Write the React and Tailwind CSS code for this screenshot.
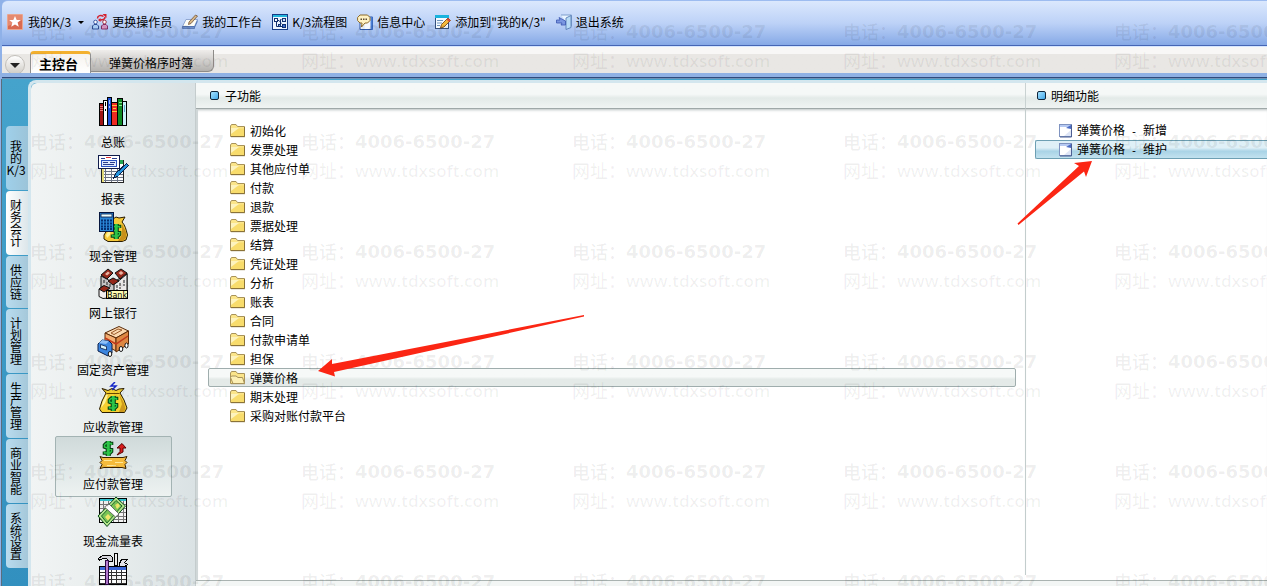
// App.jsx
import { useState } from "react";

const railTabs = [
  ["我", "的", "K/3"],
  ["财", "务", "会", "计"],
  ["供", "应", "链"],
  ["计", "划", "管", "理"],
  ["生", "产", "管", "理"],
  ["商", "业", "智", "能"],
  ["系", "统", "设", "置"],
];

const folders = [
  "初始化",
  "发票处理",
  "其他应付单",
  "付款",
  "退款",
  "票据处理",
  "结算",
  "凭证处理",
  "分析",
  "账表",
  "合同",
  "付款申请单",
  "担保",
  "弹簧价格",
  "期末处理",
  "采购对账付款平台",
];

const details = [
  { group: "弹簧价格", action: "新增" },
  { group: "弹簧价格", action: "维护" },
];

// ---- toolbar icons (16 x 16) ----

function SmallIcon({ children }) {
  return (
    <svg viewBox="0 0 16 16" className="size-4 shrink-0" aria-hidden="true">
      {children}
    </svg>
  );
}

function StarIcon() {
  return (
    <SmallIcon>
      <rect width="16" height="16" rx="1" fill="#e9a58f" />
      <rect x="1" y="1" width="14" height="14" fill="#d96a50" />
      <path d="M1 1h14v5L1 12z" fill="#e58a70" />
      <path
        d="M8 2l1.7 4h4.1l-3.2 2.6 1.2 4.2L8 10.4l-3.8 2.4 1.2-4.2L2.2 6h4.1z"
        fill="#fff"
      />
    </SmallIcon>
  );
}

function SwitchUserIcon() {
  return (
    <SmallIcon>
      <path d="M5.500 4.500C5.500 1.500 9 .5 11.500 2.500M8 6c3 0 5-1 5-3" fill="none" stroke="#d5202c" strokeWidth="1.5" />
      <path d="M10.500 0l4 0 0 4zM8.500 4v4L6 6z" fill="#d5202c" />
      <circle cx="3.500" cy="8" r="1.800" fill="#fff" stroke="#2f4d9a" strokeWidth=".9" />
      <path d="M.5 15v-3l1.500-1.500h3L6.500 12v3z" fill="#a9ccf4" stroke="#24428c" strokeWidth=".9" />
      <circle cx="12.500" cy="8" r="1.800" fill="#fff" stroke="#a02a3a" strokeWidth=".9" />
      <path d="M9.500 15v-3l1.500-1.500h3l1.500 1.500v3z" fill="#dc9ac6" stroke="#7b1f5a" strokeWidth=".9" />
    </SmallIcon>
  );
}

function DeskIcon() {
  return (
    <SmallIcon>
      <path d="M4 5.500h11.500l-3 7H.5z" fill="#fdfdf8" stroke="#7f98c8" strokeWidth=".8" />
      <path d="M.5 12.500h12v2H.5z" fill="#6d8ec9" stroke="#3c5c9e" strokeWidth=".6" />
      <path d="M12.500 12.500l3-7v2.500l-3 6.500z" fill="#4f73b5" />
      <path d="M13.500 1l2 1-6.500 7.500-2.500 1 .5-2.500z" fill="#d9b98a" stroke="#705238" strokeWidth=".8" />
    </SmallIcon>
  );
}

function FlowIcon() {
  return (
    <SmallIcon>
      <rect x=".5" y=".5" width="15" height="15" fill="#eef5ff" stroke="#173b86" />
      <rect x="1" y="1" width="14" height="2" fill="#22b6dc" />
      <path d="M4.500 7v5.500h3M5 6.500h2l2.500 3M9.500 5.500h-1v7h3" fill="none" stroke="#14306e" />
      <rect x="2.500" y="4.500" width="3" height="3" fill="#fff" stroke="#14306e" />
      <rect x="6.500" y="10.500" width="2" height="2" fill="#6fa0ee" stroke="#14306e" />
      <rect x="10.500" y="4.500" width="3" height="3" fill="#cfe0fb" stroke="#14306e" />
      <rect x="10.500" y="10.500" width="3" height="3" fill="#3b6ed0" stroke="#14306e" />
    </SmallIcon>
  );
}

function MessageIcon() {
  return (
    <SmallIcon>
      <path d="M3 3h12.500v12.500H3z" fill="#f6f9ff" stroke="#2c57a8" />
      <path d="M13.500 3h2v12.500h-2z" fill="#4a7fd6" />
      <path
        d="M3 1h7.500L13 3.500v3L10.500 9H8l-3.500 4 .5-4H3L.6 6.500v-3z"
        fill="#fff2c4"
        stroke="#8d6a28"
      />
      <path d="M3.500 4.500h1.500v1.500H3.500zM6 4.500h1.500v1.500H6zM8.500 4.500H10v1.500H8.500z" fill="#5a4a34" />
    </SmallIcon>
  );
}

function AddNoteIcon() {
  return (
    <SmallIcon>
      <rect x=".5" y="1.500" width="13" height="13" fill="#f4faff" stroke="#35507c" />
      <rect x="0" y="1" width="14" height="3" fill="#19b3dd" />
      <path d="M2 6.500h6M2 9h5M2 11.500h3" stroke="#6f94bd" />
      <path d="M13 4l2.500 2.500L9 13l-3.500 1 1-3.500z" fill="#f4b93c" stroke="#7a4a1b" strokeWidth=".9" />
      <path d="M13 4l2.500 2.500-1.500 1.500-2.500-2.500z" fill="#d8483a" />
    </SmallIcon>
  );
}

function ExitIcon() {
  return (
    <SmallIcon>
      <path d="M5 1h10.500v11h-3" fill="#e9f4ff" stroke="#7d9dcc" />
      <path d="M15 1.500v12l-5 2V4z" fill="#b9dcf6" stroke="#5a7fb5" strokeWidth=".9" />
      <path d="M.5 6H4L3 3.500 9.500 7v4H5l1-2H.5z" fill="#7a96e0" stroke="#3a55ae" strokeWidth=".8" />
    </SmallIcon>
  );
}

// ---- module icons (32 x 32) ----

function ModuleIcon({ smooth, children }) {
  return (
    <svg
      viewBox="0 0 32 32"
      className="size-8 shrink-0"
      shapeRendering={smooth ? "auto" : "crispEdges"}
      aria-hidden="true"
    >
      {children}
    </svg>
  );
}

function BooksIcon() {
  return (
    <ModuleIcon>
      <g stroke="#000">
        <rect x="2.500" y="6.500" width="4" height="22" fill="#a01414" />
        <rect x="6.500" y="3.500" width="4" height="25" fill="#fff" />
        <rect x="10.500" y=".5" width="4" height="28" fill="#1c50d8" />
        <rect x="14.500" y="5.500" width="6" height="23" fill="#ee2a22" />
        <rect x="20.500" y="1.500" width="5" height="27" fill="#0f8a24" />
        <rect x="25.500" y="4.500" width="4" height="24" fill="#c9f3fb" />
      </g>
      <path d="M3 9h3M3 11h3M3 13h3" stroke="#e87878" />
      <path d="M8 6h1M8 8h1M8 13h1" stroke="#000" strokeWidth="2" />
      <path d="M12 3v4M12 9v2" stroke="#9fc0ff" />
      <path d="M15 8h5M16 11h3M15 14h5" stroke="#ffc23a" />
      <path d="M22 5h3M22 8h3" stroke="#8fe39a" />
      <path d="M27 8v7" stroke="#58a7c8" />
    </ModuleIcon>
  );
}

function ReportIcon() {
  return (
    <ModuleIcon>
      <rect x="4.500" y="6.500" width="22" height="22" fill="#fff" stroke="#222" />
      <rect x="22" y="6" width="4" height="4" fill="#22a652" />
      <path d="M5 17.500h21M5 20.500h21M5 23.500h21M5 26.500h21M8.500 15v13M14.500 15v13M20.500 12v17" stroke="#6d7484" />
      <path d="M5 15h2v13H5z" fill="#e4dc7a" />
      <rect x="1.500" y="1.500" width="21" height="13" fill="#fff" stroke="#101c4c" />
      <rect x="4.500" y="6.500" width="15" height="6" fill="#dfe9ff" stroke="#2a52c0" />
      <path d="M4 4.500h4M15 4.500h5M6 8.500h5M13 8.500h5M6 10.500h11" stroke="#2a3c8c" />
      <path d="M9 3.500h5" stroke="#e03030" />
      <path d="M29.500 9.500l2 2-10 10-5 3 2-5z" fill="#2595e0" stroke="#0b1e4a" />
    </ModuleIcon>
  );
}

// dollar sign shared by the money icons, 10 x 16
function Dollar({ x, y }) {
  const sign = "M8.500 5V3.500H3L1.500 5v2L8.500 9.500v2L7 13H1.500v-1.500M4.500 1v15M6 1v15";
  return (
    <g transform={`translate(${x} ${y})`} fill="none">
      <path d={sign} stroke="#063f12" strokeWidth="3.600" />
      <path d={sign} stroke="#2cc548" strokeWidth="1.500" />
    </g>
  );
}

function CashIcon() {
  return (
    <ModuleIcon smooth>
      <path
        d="M14 10l-2-4 4 2 3-2 3 1 6-1-3 5c3 3 4 7 5.500 13l-1.500 5-4 1.500H11l-4-2.500v-4l5-8z"
        fill="#f6c938"
        stroke="#2a1c00"
      />
      <path d="M25 13l4 8v6l-3 3h-5l4-6z" fill="#c8901a" />
      <path d="M9 24l5-8-1 8-3 3z" fill="#fff29a" />
      <Dollar x={14} y={12} />
      <rect x="2.500" y="1.500" width="14" height="19" fill="#2a86d6" stroke="#06163e" />
      <rect x="4" y="3" width="11" height="3" fill="#eaffff" stroke="#06163e" strokeWidth=".8" />
      <path
        d="M4 9.500h2m1 0h2m1 0h2m1 0h2M4 12.500h2m1 0h2m1 0h2m1 0h2M4 15.500h2m1 0h2m1 0h2m1 0h2M4 18h2m1 0h2m1 0h2m1 0h2"
        stroke="#052f70"
        strokeWidth="1.800"
      />
    </ModuleIcon>
  );
}

function BankIcon() {
  return (
    <ModuleIcon smooth>
      <path d="M4 8l6 3 6 4 7-5 7-5v24H4z" fill="#c9c7c8" stroke="#111" />
      <path d="M17 16l7-5 6-5v22H17z" fill="#eceaea" stroke="#111" />
      <path d="M4 7l7-6 5 4-6 6zM18 5l6-4 6 4-7 6zM11 13l5-3 6 3-6 4z" fill="#96281a" stroke="#111" />
      <path d="M8 6l3-2.500L13 5l-3 2.500zM21.500 5L24 3l2.500 2L24 7z" fill="#e9b4a2" />
      <path d="M7 12v3m3-1v3m3-1v3m7-2v3m3-5v3m4-6v3m-7 6v2m3-4v2m4-5v2" stroke="#222" />
      <path d="M2 21l4-3 5 3v9l-5 .5-4-2z" fill="#f2eeee" stroke="#111" />
      <path d="M2 21l5-3.500 6 2.500-6 4z" fill="#96281a" stroke="#111" />
      <rect x="9.500" y="22.500" width="21" height="8" fill="#fdfcb0" stroke="#000" />
      <text
        x="20"
        y="29.500"
        textAnchor="middle"
        fontSize="8"
        fontFamily="DejaVu Sans, sans-serif"
      >
        Bank
      </text>
    </ModuleIcon>
  );
}

function TruckIcon() {
  return (
    <ModuleIcon smooth>
      <path d="M8 8L22 1.500 31.500 6 19 13z" fill="#fbd9b0" stroke="#5a2a08" />
      <path d="M8 8l11 5v13L8 20z" fill="#f4ad70" stroke="#5a2a08" />
      <path d="M19 13l12.500-7v13L19 27z" fill="#dd8742" stroke="#5a2a08" />
      <path d="M8 13l11 6 12-8" fill="none" stroke="#c03a1c" strokeWidth="1.500" />
      <path d="M14 8l7-4 4 1-8 4.500z" fill="none" stroke="#9a5a2c" />
      <path d="M1 19l4-4 7 1 3 3v9l-4 3-10-5z" fill="#3c86e0" stroke="#0b1e4a" />
      <path d="M5 15l7 1-3 3-7-1z" fill="#8fc0f6" />
      <path d="M3.500 19.500l6 2v3.500l-6-2z" fill="#d8f4fa" stroke="#0b1e4a" strokeWidth=".8" />
      <g fill="#fff" stroke="#111">
        <ellipse cx="13" cy="29" rx="1.800" ry="2.500" />
        <ellipse cx="24" cy="24" rx="1.800" ry="2.500" />
        <ellipse cx="29.500" cy="20.500" rx="1.600" ry="2.500" />
      </g>
    </ModuleIcon>
  );
}

function ReceivableIcon() {
  return (
    <ModuleIcon smooth>
      <path
        d="M9 11L5 6.500l6 2 4-2 4 2 3-1.500 5-.5-4 4.500 4 7 3 8-2.500 4.500H5L2.500 27l2.500-8z"
        fill="#f6d030"
        stroke="#2a1c00"
      />
      <path d="M22 12l5 9 1.500 6-2 3H22l3-8z" fill="#cf9a1c" />
      <path d="M9 13l-3 6-2 7 4-5 3-8z" fill="#fff49c" />
      <path d="M9.500 11.500h13" stroke="#6a4800" />
      <Dollar x={11} y={13} />
      <path d="M18 0l-4 4h5l-4 4" fill="none" stroke="#1428c8" strokeWidth="1.500" />
    </ModuleIcon>
  );
}

function PayableIcon() {
  return (
    <ModuleIcon smooth>
      <path
        d="M3 17.500l3 1h20l4-1-2 4 2 2-2 2 1 4-4-1H7l-4 1 2-4-2-2 2-2z"
        fill="#f5bb3c"
        stroke="#3a2200"
      />
      <path d="M7 21.500h8m3 2h8m-16 3h9" stroke="#ffe89a" />
      <Dollar x={6} y={1} />
      <path d="M20 16l3-3.500V9h-3l5-4.500L29 9h-3v4z" fill="#d81c1c" stroke="#5a0000" />
    </ModuleIcon>
  );
}

function CashFlowIcon() {
  return (
    <ModuleIcon smooth>
      <rect x="2.500" y="2.500" width="27" height="24" fill="#f4f4f4" stroke="#000" />
      <rect x="3" y="3" width="26" height="2" fill="#32c4d0" />
      <path d="M3 8.500h26M3 12.500h26M3 16.500h26M3 20.500h26M3 23.500h26M6.500 5v21M11.500 5v21M16.500 5v21M21.500 5v21M26.500 5v21" stroke="#777" />
      <path d="M1 20L19 1l9.500 9L10 30.500z" fill="#b5e48c" stroke="#0a4a1a" />
      <path d="M4.500 20L19 4.500l6 5.500L10 27z" fill="#79c456" stroke="#1d6a2a" />
      <path d="M8 21l3-3 3 3-3 3.500zM18 9l3-2 2 3-3 3z" fill="#f0e66a" />
      <path d="M7.500 11l4.500-3 10 10-3.500 3z" fill="#fff" stroke="#555" strokeWidth=".8" />
    </ModuleIcon>
  );
}

function ToolsIcon() {
  return (
    <ModuleIcon>
      <rect x="2.500" y="13.500" width="27" height="18" fill="#fff" stroke="#000" />
      <rect x="3" y="14" width="26" height="3" fill="#3a66d8" />
      <path d="M3 19.500h26M3 22.500h26M3 26.500h26M3 30.500h26M14.500 17v14M19.500 17v14M24.500 17v14" stroke="#333" />
      <path d="M1.500 5.500l4-3h8l2 2v4h-3l-3-3h-4l-3 2z" fill="#d6d6dc" stroke="#000" />
      <path d="M8.500 7.500h3v24h-3z" fill="#b57ad0" stroke="#2c0a44" />
      <path d="M17.500.5h3v12h-3z" fill="#eee" stroke="#000" />
      <path d="M22.500 10.500l2-4h6l-3 3 3 2-3 2h-5z" fill="#e2e2e8" stroke="#000" />
    </ModuleIcon>
  );
}

const modules = [
  { name: "总账", Icon: BooksIcon },
  { name: "报表", Icon: ReportIcon },
  { name: "现金管理", Icon: CashIcon },
  { name: "网上银行", Icon: BankIcon },
  { name: "固定资产管理", Icon: TruckIcon },
  { name: "应收款管理", Icon: ReceivableIcon },
  { name: "应付款管理", Icon: PayableIcon },
  { name: "现金流量表", Icon: CashFlowIcon },
  { name: "系统工具", Icon: ToolsIcon, iconOnly: true },
];

const toolbar = [
  { name: "更换操作员", Icon: SwitchUserIcon },
  { name: "我的工作台", Icon: DeskIcon },
  { name: "K/3流程图", Icon: FlowIcon },
  { name: "信息中心", Icon: MessageIcon },
  { name: "添加到\"我的K/3\"", Icon: AddNoteIcon },
  { name: "退出系统", Icon: ExitIcon },
];

function FolderIcon({ open }) {
  return (
    <svg viewBox="0 0 16 14" className="h-3.5 w-4 shrink-0" aria-hidden="true">
      <path d="M1 13.500V2l1-1h4l1.500 2H15v10.500z" fill="#8a7c48" opacity=".35" />
      <path d="M.5 12.500V2l1-1.500h4.500l1.500 2h7v10z" fill="#fbe58a" stroke="#a8935a" />
      {open ? (
        <path d="M3 12.500L.5 6.500l1-1.500H6l2 1.500h4.500l2 6z" fill="#fdf0b4" stroke="#a8935a" />
      ) : (
        <>
          <path d="M1 4.500h13v7.500H1z" fill="#f8dc6c" />
          <path d="M1 4h8L1 10z" fill="#fdf3be" />
          <path d="M14.500 3v9.500H1" fill="none" stroke="#8a7238" />
        </>
      )}
    </svg>
  );
}

function DocIcon() {
  return (
    <svg viewBox="0 0 13 14" className="h-3.5 w-[13px] shrink-0" aria-hidden="true">
      <rect x=".5" y=".5" width="12" height="12" fill="#fff" stroke="#7f93c0" />
      <path d="M1 1h11v2H1z" fill="#b7caf2" />
      <path d="M7 4l5-3v4z" fill="#4a6cc6" />
      <path d="M12 6v6H5z" fill="#dfe6f6" />
      <path d="M12.500 1v12H1" fill="none" stroke="#4d5f92" />
    </svg>
  );
}

function Bullet() {
  return (
    <span className="size-[9px] rounded-xs border border-[#10263c] bg-gradient-to-br from-[#a4e2ff] to-[#3fa9ea]" />
  );
}

function ColumnHeader({ title, className }) {
  return (
    <h2
      className={`flex h-[26px] shrink-0 items-center border-b border-[#9fa8a8] bg-gradient-to-b from-[#f5f8f7] from-45% via-[#e3eae8] via-60% to-[#f0f4f3] text-xs ${className}`}
    >
      <Bullet />
      {title}
    </h2>
  );
}

function Watermark() {
  const rows = [0, 1, 2, 3, 4, 5];
  const cols = [0, 1, 2, 3, 4];
  return (
    <div
      aria-hidden="true"
      className="pointer-events-none absolute inset-0 grid auto-cols-[271px] grid-flow-col grid-rows-[repeat(6,110px)] overflow-hidden pt-[17px] pl-[30px] text-lg leading-[29px] font-bold whitespace-nowrap select-none"
    >
      {cols.map((c) =>
        rows.map((r) => (
          <div key={`${c}-${r}`}>
            <div className="flex text-black/7">
              <span className="w-[54px] font-medium">电话：</span>
              <span className="font-['DejaVu_Sans',sans-serif]">4006-6500-27</span>
            </div>
            <div className="flex text-black/6">
              <span className="w-[54px] font-medium">网址：</span>
              <span className="font-['Open_Sans',sans-serif] text-[17px] font-semibold">
                www.tdxsoft.com
              </span>
            </div>
          </div>
        )),
      )}
    </div>
  );
}

export default function App() {
  const [activeModule, setActiveModule] = useState("应付款管理");
  const [activeFolder, setActiveFolder] = useState("弹簧价格");
  const [activeDetail, setActiveDetail] = useState("维护");

  return (
    <div className="relative flex h-screen flex-col overflow-hidden bg-[#8fb1e8] font-['Noto_Sans_CJK_SC',sans-serif] text-xs text-black">
      <header className="ml-0.5 flex h-[46px] shrink-0 items-center gap-2.5 rounded-tl-md border-t border-b border-t-[#9dbcf0] border-b-[#4565b4] bg-gradient-to-b from-[#dbe8fd] via-[#bdd2f7] to-[#86a9e6] pb-0.5 pl-[5px] whitespace-nowrap">
        <button className="-mr-0.5 flex items-center gap-[5px]">
          <StarIcon />
          我的K/3
          <span className="ml-0.5 border-x-[3px] border-t-[3px] border-x-transparent border-t-black" />
        </button>
        {toolbar.map(({ name, Icon }) => (
          <button key={name} className="flex items-center gap-1">
            <Icon />
            {name}
          </button>
        ))}
      </header>

      <nav className="ml-0.5 flex h-[27px] shrink-0 items-end border-t border-[#d6e6ff] bg-gradient-to-b from-[#f8f7f6] from-25% to-[#e9e7e4] to-25% pl-[3px]">
        <button
          aria-label="更多"
          className="mr-[5px] -mb-0.5 flex size-5 items-center justify-center rounded-full border border-[#c2bfba] bg-gradient-to-b from-white to-[#cfccc6]"
        >
          <span className="border-x-[5px] border-t-[5px] border-x-transparent border-t-[#222]" />
        </button>
        <button className="h-[22px] w-[61px] rounded-t-sm border-x border-t-3 border-x-[#8f8f8f] border-t-[#f3b02e] bg-gradient-to-b from-[#f6f3ee] to-white pr-1 text-[13px] leading-[18px] font-bold">
          主控台
        </button>
        <button className="mb-px h-[22px] w-[123px] rounded-br-md border-r border-b border-[#8d8b88] bg-gradient-to-b from-[#efedeb] to-[#b4b2af] pr-0.5 leading-[26px]">
          弹簧价格序时簿
        </button>
      </nav>
      <div className="h-1 shrink-0 bg-[#8fb1e4]" />
      <div className="ml-0.5 h-0.5 shrink-0 border-t border-[#2f4a7c] bg-[#6f93b8]" />

      <div className="ml-px flex min-h-0 flex-1 border-l border-[#5b6d7c] bg-gradient-to-b from-[#45a3cc] to-[#3290bf]">
        <div className="flex w-[26px] shrink-0 flex-col gap-px pt-[47px] pl-1">
          {railTabs.map((chars) => (
            <button
              key={chars.join("")}
              className={`flex flex-col items-center rounded-l-sm bg-gradient-to-r pr-0.5 text-xs leading-3 ${
                chars[2] === "K/3"
                  ? "from-[#9fd0ea] to-[#9cc4d9] py-3.5"
                  : chars[0] === "财"
                    ? "from-white to-[#dce6ea] py-2"
                    : "from-[#b9dcef] to-[#a5c8da] py-2"
              }`}
            >
              {chars.map((char) => (
                <span key={char}>{char}</span>
              ))}
            </button>
          ))}
        </div>

        <div className="mt-px flex min-w-0 flex-1 overflow-hidden rounded-tl-lg border-t-3 border-l-3 border-[#d3e6ee]">
          <aside className="flex w-[165px] shrink-0 flex-col items-center rounded-tl-md border-r border-[#c4cccd] bg-gradient-to-r from-[#f1f4f4] via-[#e8eded] to-[#dae2e4] pt-[11px]">
            {modules.map(({ name, Icon, iconOnly }) => (
              <button
                key={name}
                aria-label={name}
                onClick={() => setActiveModule(name)}
                className={`-mb-1 flex h-[61px] w-[117px] shrink-0 flex-col items-center rounded-xs border pt-0.5 leading-[25px] ${
                  name === activeModule
                    ? "border-[#a3b3b3] bg-gradient-to-b from-[#d0dada] via-[#dfe7e7] to-[#edf2f1]"
                    : "border-transparent"
                }`}
              >
                <Icon />
                {!iconOnly && name}
              </button>
            ))}
          </aside>

          <div className="flex min-w-0 flex-1 flex-col bg-white">
            <div className="flex min-h-0 flex-1">
              <main className="relative flex min-w-0 flex-1 flex-col">
                <ColumnHeader title="子功能" className="gap-1.5 pl-3.5" />
                <ul className="flex-1 border-l-2 border-[#d0d7d8] pt-3 pr-[9px] pl-2.5 shadow-[inset_0_3px_3px_-2px_#b9c0c0]">
                  {folders.map((name) => (
                    <li key={name}>
                      <button
                        onClick={() => setActiveFolder(name)}
                        className={`flex h-[19px] w-full items-center gap-1 rounded-xs border pl-[21px] ${
                          name === activeFolder
                            ? "border-[#9fadad] bg-gradient-to-b from-[#f6f9f8] from-45% to-[#e4eae8] to-60%"
                            : "border-transparent"
                        }`}
                      >
                        <FolderIcon open={name === activeFolder} />
                        {name}
                      </button>
                    </li>
                  ))}
                </ul>
                {/* arrow to the selected folder */}
                <svg
                  viewBox="0 0 268 64"
                  className="pointer-events-none absolute top-[231px] left-[122px] z-10 h-16 w-[268px]"
                  aria-hidden="true"
                >
                  <path d="M0 57L14 45V50L266 1V2.500L16 58L17 62.500Z" fill="#fb2614" />
                </svg>
              </main>

              <section className="relative flex w-[242px] shrink-0 flex-col">
                <ColumnHeader title="明细功能" className="gap-[5px] border-l border-l-[#c9d2d2] pl-[11px]" />
                <ul className="mb-[5px] flex-1 border-l border-[#c3cdcd] pt-3 pl-[9px] shadow-[inset_0_3px_3px_-2px_#b9c0c0]">
                  {details.map(({ group, action }) => (
                    <li key={action}>
                      <button
                        onClick={() => setActiveDetail(action)}
                        className={`flex h-[19px] w-full items-center gap-[5px] rounded-l-xs border border-r-0 pl-[23px] ${
                          action === activeDetail
                            ? "border-[#6d9fb3] bg-gradient-to-b from-[#dff0f7] from-40% via-[#a9d3e6] via-60% to-[#c2e2ef]"
                            : "border-transparent"
                        }`}
                      >
                        <DocIcon />
                        <span>
                          {group}
                          <span className="font-['Liberation_Mono',monospace] text-[10px] whitespace-pre">
                            {" - "}
                          </span>
                          {action}
                        </span>
                      </button>
                    </li>
                  ))}
                </ul>
                {/* arrow to the selected detail */}
                <svg
                  viewBox="0 0 76 66"
                  className="pointer-events-none absolute top-[77px] -left-2 z-10 h-[66px] w-[76px]"
                  aria-hidden="true"
                >
                  <path d="M75 1L57 3L62 6L.5 63.500L1.500 65L67 11.500L69 17Z" fill="#fb2614" />
                </svg>
              </section>
            </div>
            <footer className="h-1.5 shrink-0 border-t border-[#aab3b1] bg-[#f3f6f5]" />
          </div>
        </div>
      </div>

      <Watermark />
    </div>
  );
}
